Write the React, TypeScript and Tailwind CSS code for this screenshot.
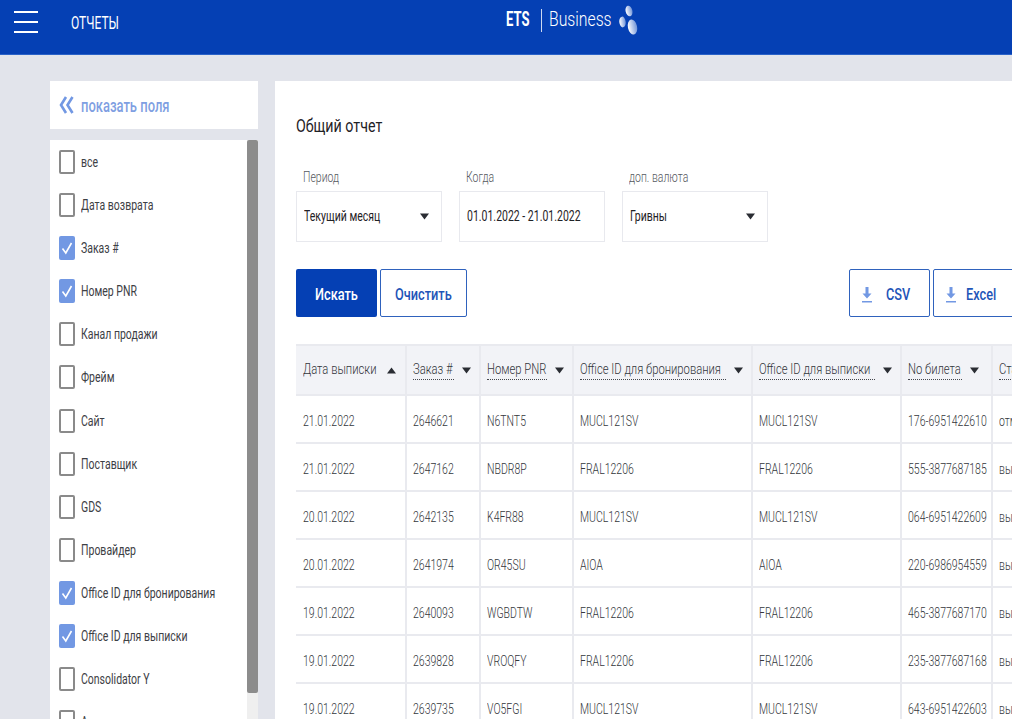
import React from "react";

function S({ children, className = "", scale = "scale-x-[0.75]" }: { children: React.ReactNode; className?: string; scale?: string }) {
  return <span className={"inline-block whitespace-nowrap origin-left " + scale + " " + className}>{children}</span>;
}

function Caret({ up = false, className = "" }: { up?: boolean; className?: string }) {
  return (
    <svg width="9" height="7" viewBox="0 0 9 7" className={"shrink-0 " + className}>
      <path d={up ? "M4.5 0.5 L9 6.5 L0 6.5 Z" : "M0 0.5 L9 0.5 L4.5 6.5 Z"} fill="#2a2d33" />
    </svg>
  );
}

function Check({ on }: { on: boolean }) {
  return on ? (
    <span className="flex h-[24px] w-[16px] shrink-0 items-center justify-center rounded-[2px] bg-[#7298e3]">
      <svg width="12" height="16" viewBox="0 0 12 16" fill="none">
        <path d="M1.5 8.5 L4.8 13 L10.5 3" stroke="#fff" strokeWidth="1.6" />
      </svg>
    </span>
  ) : (
    <span className="h-[24px] w-[16px] shrink-0 rounded-[2px] border-2 border-[#8a8a8a] bg-white" />
  );
}

function Download() {
  return (
    <svg width="10" height="18" viewBox="0 0 10 18" className="shrink-0">
      <path d="M3.5 1 H6.5 V7.5 H9.5 L5 12.5 L0.5 7.5 H3.5 Z" fill="#7298e3" />
      <rect x="0" y="15" width="10" height="1.5" fill="#7298e3" />
    </svg>
  );
}

function Logo() {
  return (
    <svg width="20" height="32" viewBox="0 0 20 32">
      <defs>
        <linearGradient id="lg" x1="0" y1="0" x2="1" y2="0">
          <stop offset="0" stopColor="#ffffff" />
          <stop offset="1" stopColor="#6f93d8" />
        </linearGradient>
      </defs>
      <ellipse cx="10" cy="7" rx="3.4" ry="5.4" fill="url(#lg)" transform="rotate(-14 10 7)" />
      <ellipse cx="3.5" cy="18" rx="3.2" ry="5.4" fill="url(#lg)" transform="rotate(-6 3.5 18)" />
      <ellipse cx="13.5" cy="23" rx="4.6" ry="7.6" fill="url(#lg)" transform="rotate(-12 13.5 23)" />
    </svg>
  );
}

const fields: [string, boolean][] = [
  ["все", false],
  ["Дата возврата", false],
  ["Заказ #", true],
  ["Номер PNR", true],
  ["Канал продажи", false],
  ["Фрейм", false],
  ["Сайт", false],
  ["Поставщик", false],
  ["GDS", false],
  ["Провайдер", false],
  ["Office ID для бронирования", true],
  ["Office ID для выписки", true],
  ["Consolidator Y", false],
  ["Агент", false],
];

const rows = [
  ["21.01.2022", "2646621", "N6TNT5", "MUCL121SV", "MUCL121SV", "176-6951422610", "отменен"],
  ["21.01.2022", "2647162", "NBDR8P", "FRAL12206", "FRAL12206", "555-3877687185", "выписан"],
  ["20.01.2022", "2642135", "K4FR88", "MUCL121SV", "MUCL121SV", "064-6951422609", "выписан"],
  ["20.01.2022", "2641974", "OR45SU", "AIOA", "AIOA", "220-6986954559", "выписан"],
  ["19.01.2022", "2640093", "WGBDTW", "FRAL12206", "FRAL12206", "465-3877687170", "выписан"],
  ["19.01.2022", "2639828", "VROQFY", "FRAL12206", "FRAL12206", "235-3877687168", "выписан"],
  ["19.01.2022", "2639735", "VO5FGI", "MUCL121SV", "MUCL121SV", "643-6951422603", "выписан"],
];

const headers: { t: string; w: string; up?: boolean; dotted: boolean; caretX: string }[] = [
  { t: "Дата выписки", w: "w-[110px]", up: true, dotted: false, caretX: "w-[76px]" },
  { t: "Заказ #", w: "w-[74px]", dotted: true, caretX: "w-[41px]" },
  { t: "Номер PNR", w: "w-[93px]", dotted: true, caretX: "w-[60px]" },
  { t: "Office ID для бронирования", w: "w-[179px]", dotted: true, caretX: "w-[146px]" },
  { t: "Office ID для выписки", w: "w-[149px]", dotted: true, caretX: "w-[116px]" },
  { t: "No билета", w: "w-[91px]", dotted: true, caretX: "w-[54px]" },
  { t: "Статус", w: "w-[80px]", dotted: true, caretX: "w-[40px]" },
];

function Select({ label, value, w, caret }: { label: string; value: string; w: string; caret: boolean }) {
  return (
    <div className={"flex flex-col " + w}>
      <span className="h-[27px] pl-[7px] pt-[5px] text-[14px] leading-[16px] font-light text-[#55585e]">
        <S>{label}</S>
      </span>
      <div className="flex h-[51px] items-center justify-between border border-[#e8e9ee] pl-[7px] pr-[12px] text-[14px] text-[#1f2226]">
        <S>{value}</S>
        {caret && <Caret />}
      </div>
    </div>
  );
}

export default function App() {
  return (
    <div className="flex h-[719px] w-[1012px] flex-col overflow-hidden bg-[#e2e4eb] font-['Roboto',sans-serif]">
      <header className="relative flex h-[55px] shrink-0 items-center border-b border-[#2a62c8] bg-[#0540b4] pb-[10px] text-white">
        <div className="ml-[14px] flex w-[24px] flex-col gap-[8px]">
          <span className="h-[2px] bg-white" />
          <span className="h-[2px] bg-white" />
          <span className="h-[2px] bg-white" />
        </div>
        <span className="ml-[33px] text-[18px]">
          <S scale="scale-x-[0.667]">ОТЧЕТЫ</S>
        </span>
        <div className="absolute left-[506px] top-[4px] flex h-[32px] items-center">
          <span className="w-[35px] text-[21px] font-bold"><S scale="scale-x-[0.62]">ETS</S></span>
          <span className="h-[23px] w-px bg-white/80" />
          <span className="ml-[7px] w-[70px] text-[21px] font-light"><S>Business</S></span>
          <Logo />
        </div>
      </header>

      <div className="flex min-h-0 flex-1 pl-[50px] pt-[26px]">
        <aside className="flex w-[208px] shrink-0 flex-col gap-[11px]">
          <div className="flex h-[48px] shrink-0 items-center gap-[7px] bg-white pl-[9px] text-[#7f9fe2]">
            <svg width="15" height="18" viewBox="0 0 15 18" fill="none" stroke="#7298e3" strokeWidth="2.6">
              <path d="M7 1 L2 9 L7 17 M13.5 1 L8.5 9 L13.5 17" />
            </svg>
            <span className="text-[18px] font-medium"><S scale="scale-x-[0.72]">показать поля</S></span>
          </div>
          <div className="relative min-h-0 flex-1 overflow-hidden bg-white">
            <div className="absolute right-0 top-0 h-full w-[11px] bg-[#efefef]">
              <div className="h-[553px] rounded-[2px] bg-[#8c8c8c]" />
            </div>
            <ul className="flex flex-col pl-[9px] pt-[10px]">
              {fields.map(([t, on]) => (
                <li key={t} className="flex h-[43.1px] shrink-0 items-start gap-[6px] text-[14px] text-[#3d4045]">
                  <Check on={on} />
                  <span className="mt-[3px] leading-[18px]"><S>{t}</S></span>
                </li>
              ))}
            </ul>
          </div>
        </aside>

        <main className="ml-[17px] min-w-0 flex-1 overflow-hidden bg-white pl-[21px]">
          <h1 className="mt-[34px] h-[22px] text-[19px] leading-[22px] font-normal text-[#1f2226]">
            <S>Общий отчет</S>
          </h1>
          <div className="mt-[27px] flex gap-[17px]">
            <Select label="Период" value="Текущий месяц" w="w-[146px]" caret />
            <Select label="Когда" value="01.01.2022 - 21.01.2022" w="w-[146px]" caret={false} />
            <Select label="доп. валюта" value="Гривны" w="w-[146px]" caret />
          </div>
          <div className="mt-[27px] flex w-[721px] items-center">
            <button className="flex h-[48px] w-[81px] shrink-0 items-center rounded-[2px] bg-[#0540b4] pl-[19px] pt-[3px] text-[17px] font-medium text-white">
              <S>Искать</S>
            </button>
            <button className="ml-[3px] flex h-[48px] w-[87px] shrink-0 items-center rounded-[2px] border border-[#2f62bd] pl-[14px] pt-[3px] text-[17px] font-medium text-[#1f55b8]">
              <S>Очистить</S>
            </button>
            <button className="ml-auto flex h-[48px] w-[81px] shrink-0 items-center gap-[14px] rounded-[2px] border border-[#2f62bd] pl-[12px] pt-[3px] text-[17px] font-medium text-[#1f55b8]">
              <Download />
              <S>CSV</S>
            </button>
            <button className="ml-[3px] flex h-[48px] w-[84px] shrink-0 items-center gap-[10px] rounded-[2px] border border-[#2f62bd] pl-[12px] pt-[3px] text-[17px] font-medium text-[#1f55b8]">
              <Download />
              <S>Excel</S>
            </button>
          </div>
          <table className="mt-[27px] w-[776px] table-fixed border-collapse text-[14px] font-light text-[#33363b]">
            <thead>
              <tr className="h-[50px] border-y-2 border-[#e9eaef] bg-[#f2f3f7]">
                {headers.map((h) => (
                  <th key={h.t} className={"border-r-2 border-[#e9eaef] pl-[6px] text-left text-[15px] font-light first:pl-[7px] " + h.w}>
                    <div className="flex items-center gap-[8px]">
                      <span className={"inline-block h-[19px] overflow-visible leading-[17px] " + h.caretX + (h.dotted ? " border-b border-dotted border-[#44474d]" : "")}>
                        <S>{h.t}</S>
                      </span>
                      <Caret up={h.up} />
                    </div>
                  </th>
                ))}
              </tr>
            </thead>
            <tbody>
              {rows.map((r) => (
                <tr key={r[1]} className="h-[48px] border-b-2 border-[#e9eaef]">
                  {r.map((c, i) => (
                    <td key={i} className="border-r-2 border-[#e9eaef] pl-[6px] pt-[4px] first:pl-[7px]">
                      <S>{c}</S>
                    </td>
                  ))}
                </tr>
              ))}
            </tbody>
          </table>
        </main>
      </div>
    </div>
  );
}
